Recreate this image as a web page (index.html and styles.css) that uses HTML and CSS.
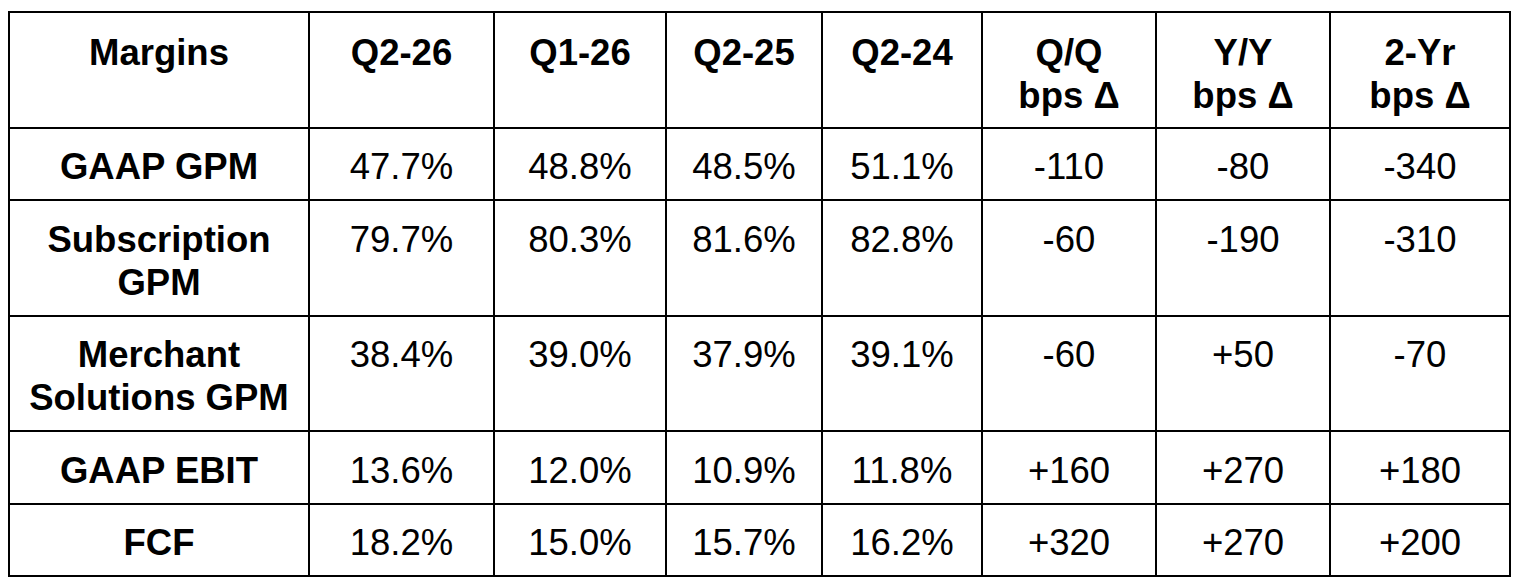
FILE: index.html
```html
<!DOCTYPE html>
<html>
<head>
<meta charset="utf-8">
<link rel="stylesheet" href="styles.css">
</head>
<body>
<table class="margins">
  <colgroup>
    <col class="c-label">
    <col class="c-q226">
    <col class="c-q126">
    <col class="c-q225">
    <col class="c-q224">
    <col class="c-qq">
    <col class="c-yy">
    <col class="c-2yr">
  </colgroup>
  <thead>
    <tr>
      <th>Margins</th>
      <th>Q2-26</th>
      <th>Q1-26</th>
      <th>Q2-25</th>
      <th>Q2-24</th>
      <th>Q/Q<br>bps Δ</th>
      <th>Y/Y<br>bps Δ</th>
      <th>2-Yr<br>bps Δ</th>
    </tr>
  </thead>
  <tbody>
    <tr>
      <th>GAAP GPM</th>
      <td>47.7%</td><td>48.8%</td><td>48.5%</td><td>51.1%</td>
      <td>-110</td><td>-80</td><td>-340</td>
    </tr>
    <tr>
      <th>Subscription<br>GPM</th>
      <td>79.7%</td><td>80.3%</td><td>81.6%</td><td>82.8%</td>
      <td>-60</td><td>-190</td><td>-310</td>
    </tr>
    <tr>
      <th>Merchant<br>Solutions GPM</th>
      <td>38.4%</td><td>39.0%</td><td>37.9%</td><td>39.1%</td>
      <td>-60</td><td>+50</td><td>-70</td>
    </tr>
    <tr>
      <th>GAAP EBIT</th>
      <td>13.6%</td><td>12.0%</td><td>10.9%</td><td>11.8%</td>
      <td>+160</td><td>+270</td><td>+180</td>
    </tr>
    <tr>
      <th>FCF</th>
      <td>18.2%</td><td>15.0%</td><td>15.7%</td><td>16.2%</td>
      <td>+320</td><td>+270</td><td>+200</td>
    </tr>
  </tbody>
</table>
</body>
</html>
```
FILE: styles.css
```css
html, body {
  margin: 0;
  background: #ffffff;
}
body {
  padding: 11px 8px 0 8px;
  font-family: "Liberation Sans", Arial, sans-serif;
  color: #000000;
}
.margins {
  border-collapse: collapse;
  table-layout: fixed;
  width: 1501px;
  font-size: 36.5px;
  line-height: 43px;
}
.c-label { width: 300px; }
.c-q226 { width: 185px; }
.c-q126 { width: 172px; }
.c-q225 { width: 156px; }
.c-q224 { width: 160px; }
.c-qq { width: 174px; }
.c-yy { width: 174px; }
.c-2yr { width: 180px; }
.margins th,
.margins td {
  border: 2px solid #000000;
  padding: 16.5px 6px 11px 6px;
  text-align: center;
  vertical-align: top;
}
.margins thead th {
  padding-top: 17.5px;
  padding-bottom: 10px;
}
.margins th {
  font-weight: bold;
}
.margins td {
  font-weight: normal;
}
```
